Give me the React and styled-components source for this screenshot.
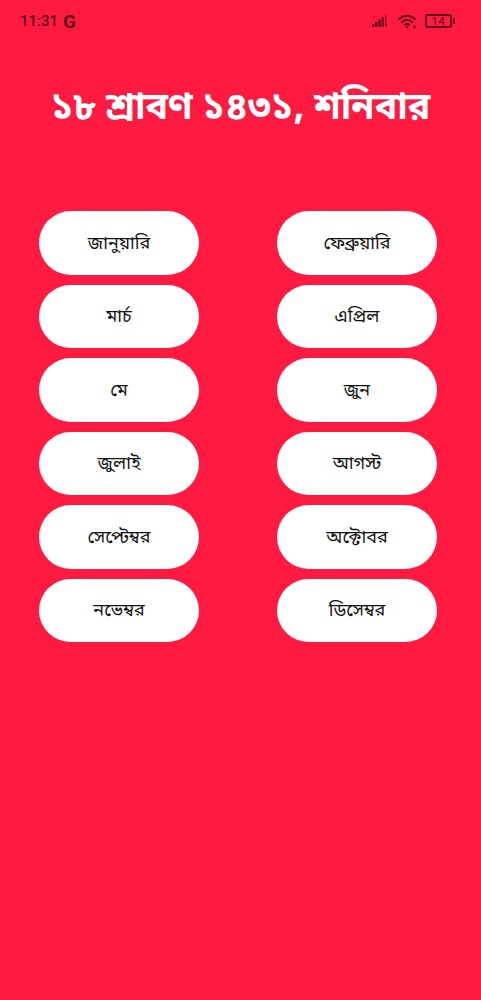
import React from 'react';
import styled, { createGlobalStyle } from 'styled-components';

const Global = createGlobalStyle`
  html, body { margin: 0; padding: 0; background: #fe1a40; }
`;
const Page = styled.div`
  width: 481px; height: 1000px; background: #fe1a40; overflow: hidden;
  font-family: "Noto Sans Bengali", "Lohit Bengali", "Noto Sans", "DejaVu Sans", sans-serif;
`;
const Status = styled.div`
  height: 42px; padding: 0 29px 0 20px; display: flex; align-items: center; justify-content: space-between;
  color: #650719;
`;
const Clock = styled.div`
  display: flex; align-items: center; gap: 5px; font: 500 15px Roboto, sans-serif;
`;
const GMark = styled.span`
  font: 700 19px/15px Roboto, sans-serif;
`;
const Indicators = styled.div`
  display: flex; align-items: center; gap: 8px;
`;
const SignalIcon = styled.svg`
  margin-right: 3px;
`;
const Battery = styled.div`
  position: relative; width: 23px; height: 10px; border: 2px solid #650719; border-radius: 3px;
  display: flex; align-items: center; justify-content: center;
  font: 400 11px Roboto, sans-serif; letter-spacing: 0.5px;
  &::after {
    content: ""; position: absolute; right: -5px; top: 2px; width: 2px; height: 6px;
    background: #650719; border-radius: 0 1px 1px 0;
  }
`;
const Title = styled.h1`
  margin: 43px 0 0; text-align: center; color: #fff; font-size: 37.4px; line-height: 50px; font-weight: 700;
  white-space: nowrap;
`;
const Grid = styled.div`
  margin: 76px 0 0 39px; width: 398px; display: grid; grid-template-columns: 160px 160px;
  justify-content: space-between; row-gap: 10px;
`;
const Month = styled.button`
  height: 63.5px; border: 0; border-radius: 32px; background: #fff; color: #111; font-size: 18px;
  font-family: inherit; padding: 2px 0 0;
`;
const Signal = () => (
  <SignalIcon width="15" height="12" viewBox="0 0 15 12" fill="#650719">
    <rect x="0" y="9" width="2.4" height="3" />
    <rect x="3.2" y="7" width="2.4" height="5" />
    <rect x="6.4" y="4.5" width="2.4" height="7.5" />
    <rect x="9.6" y="2" width="2.4" height="10" opacity="0.8" />
    <rect x="12.8" y="0" width="2" height="12" opacity="0.4" />
  </SignalIcon>
);
const Wifi = () => (
  <svg width="19" height="15" viewBox="0 0 19 15" fill="none" stroke="#650719" strokeWidth="2.1" strokeLinecap="round">
    <path d="M1.2 5C5.8 .6 12.2 .6 16.8 5" />
    <path d="M4 8C7 5.3 11 5.3 14 8" />
    <path d="M6.8 10.8C8.2 9.6 9.8 9.6 11.2 10.8" />
    <circle cx="9" cy="13.2" r="1.2" fill="#650719" stroke="none" />
    <circle cx="16.5" cy="13" r="1.7" fill="#650719" stroke="none" opacity="0.65" />
  </svg>
);
const months = ['জানুয়ারি','ফেব্রুয়ারি','মার্চ','এপ্রিল','মে','জুন','জুলাই','আগস্ট','সেপ্টেম্বর','অক্টোবর','নভেম্বর','ডিসেম্বর'];
export default function App() {
  return <Page><Global/>
    <Status>
      <Clock><span>11:31</span><GMark>G</GMark></Clock>
      <Indicators><Signal/><Wifi/><Battery>14</Battery></Indicators>
    </Status>
    <Title>১৮ শ্রাবণ ১৪৩১, শনিবার</Title>
    <Grid>{months.map(m => <Month key={m}>{m}</Month>)}</Grid>
  </Page>;
}
